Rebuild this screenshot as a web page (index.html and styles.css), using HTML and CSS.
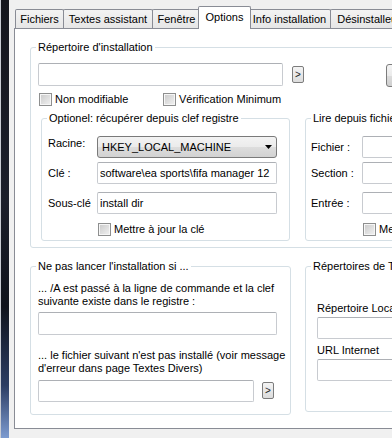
FILE: index.html
```html
<!DOCTYPE html>
<html lang="fr">
<head>
    <meta charset="UTF-8">
    <title>Options</title>
    <link rel="stylesheet" href="styles.css">
</head>
<body>
<div class="screen">
    <div class="desktop"></div>

    <div class="dialog">
        <!-- Tab strip -->
        <div class="tabs">
            <div class="tab tab-files">Fichiers</div>
            <div class="tab tab-texts">Textes assistant</div>
            <div class="tab tab-window">Fenêtre</div>
            <div class="tab tab-options active">Options</div>
            <div class="tab tab-info">Info installation</div>
            <div class="tab tab-uninstall">Désinstalleur</div>
        </div>

        <div class="page">
            <fieldset class="group group-install">
                <legend>Répertoire d'installation</legend>
                <div class="install-body">
                    <div class="path-row">
                        <input class="field field-path" type="text">
                        <button class="btn-more">&gt;</button>
                        <button class="btn-browse"></button>
                    </div>

                    <div class="check-row">
                        <label class="check-item check-first"><span class="check"></span>Non modifiable</label>
                        <label class="check-item"><span class="check"></span>Vérification Minimum</label>
                    </div>

                    <div class="sub-groups">
                        <!-- Registry -->
                        <fieldset class="group group-registry">
                            <legend>Optionel: récupérer depuis clef registre</legend>
                            <div class="registry-body">
                                <div class="form-row">
                                    <span class="form-label label-raise">Racine:</span>
                                    <div class="combo">
                                        <span>HKEY_LOCAL_MACHINE</span>
                                        <svg width="7" height="4" viewBox="0 0 7 4"><path d="M0 0h7L3.5 4z" fill="#000"/></svg>
                                    </div>
                                </div>
                                <div class="form-row row-gap-sm">
                                    <span class="form-label">Clé :</span>
                                    <input class="field field-reg" type="text" value="software\ea sports\fifa manager 12">
                                </div>
                                <div class="form-row row-gap-lg">
                                    <span class="form-label">Sous-clé</span>
                                    <input class="field field-reg" type="text" value="install dir">
                                </div>
                                <label class="check-item registry-check"><span class="check"></span>Mettre à jour la clé</label>
                            </div>
                        </fieldset>

                        <!-- INI file -->
                        <fieldset class="group group-file">
                            <legend>Lire depuis fichier INI</legend>
                            <div class="file-body">
                                <div class="form-row">
                                    <span class="form-label">Fichier :</span>
                                    <input class="field field-ini" type="text">
                                </div>
                                <div class="form-row row-gap-sm">
                                    <span class="form-label">Section :</span>
                                    <input class="field field-ini" type="text">
                                </div>
                                <div class="form-row row-gap-lg">
                                    <span class="form-label">Entrée :</span>
                                    <input class="field field-ini" type="text">
                                </div>
                                <label class="check-item file-check"><span class="check"></span>Mettre à jour</label>
                            </div>
                        </fieldset>
                    </div>
                </div>
            </fieldset>

            <div class="bottom-groups">
                <fieldset class="group group-skip">
                    <legend>Ne pas lancer l'installation si ...</legend>
                    <div class="skip-body">
                        <p class="note">... /A est passé à la ligne de commande et la clef<br>suivante existe dans le registre :</p>
                        <input class="field field-skip-reg" type="text">
                        <p class="note note-second">... le fichier suivant n'est pas installé (voir message<br>d'erreur dans page Textes Divers)</p>
                        <div class="skip-file-row">
                            <input class="field field-skip-file" type="text">
                            <button class="btn-more btn-more-low">&gt;</button>
                        </div>
                    </div>
                </fieldset>

                <fieldset class="group group-dirs">
                    <legend>Répertoires de Travail</legend>
                    <div class="dirs-body">
                        <p class="note">Répertoire Local</p>
                        <input class="field field-dir" type="text">
                        <p class="note note-url">URL Internet</p>
                        <input class="field field-dir" type="text">
                    </div>
                </fieldset>
            </div>
        </div>
    </div>
</div>
</body>
</html>
```

FILE: styles.css
```css
body {
    margin: 0;
    width: 392px;
    height: 438px;
    overflow: hidden;
    font-family: "Liberation Sans", Arial, sans-serif;
    font-size: 11px;
    line-height: 13px;
    color: #000;
    background: #f0f0f0;
}

.screen {
    display: flex;
    height: 438px;
}

.desktop {
    flex: none;
    width: 9px;
    border-left: 1px solid #c9ccd3;
    box-sizing: border-box;
    background: linear-gradient(#15161d 0%, #1c1f2b 45%, #10131c 70%, #2c3d63 88%, #7d9bd0 100%);
}

.dialog {
    flex: none;
    width: 480px;
    padding: 6px 0 0 5px;
    background: #f0f0f0;
}

/* Tabs */
.tabs {
    display: flex;
    align-items: flex-end;
    height: 22px;
    padding-left: 1px;
    position: relative;
    z-index: 1;
}

.tab {
    flex: none;
    box-sizing: border-box;
    height: 19px;
    margin-left: -1px;
    border: 1px solid #898c95;
    border-bottom: 0;
    border-radius: 2px 2px 0 0;
    background: linear-gradient(#f3f3f3, #e6e6e6);
    display: flex;
    align-items: center;
    justify-content: center;
    white-space: nowrap;
}

.tab:first-child {
    margin-left: 0;
}

.tab.active {
    height: 23px;
    margin: 0 -2px -1px -3px;
    padding-bottom: 2px;
    background: #fff;
    position: relative;
    z-index: 2;
}

.tab-files { width: 49px; }
.tab-texts { width: 90px; }
.tab-window { width: 49px; }
.tab-options { width: 53px; }
.tab-info { width: 83px; }
.tab-uninstall { width: 78px; }

.page {
    box-sizing: border-box;
    height: 401px;
    border: 1px solid #898c95;
    background: #fff;
}

/* Group boxes */
.group {
    margin: 0;
    padding: 0;
    min-width: 0;
    border: 1px solid #d5dfe5;
    border-radius: 3px;
    box-sizing: border-box;
}

.group legend {
    margin-left: 5px;
    padding: 0 2px;
    line-height: 13px;
    white-space: nowrap;
}

.group-install {
    width: 440px;
    margin: 12px 0 0 15px;
}

.install-body {
    padding: 9px 0 6px 7px;
}

/* Inputs, buttons, checkboxes */
.field {
    box-sizing: border-box;
    height: 22px;
    margin: 0;
    padding: 0 2px;
    border: 1px solid #c8cbd0;
    border-top-color: #adb0b5;
    border-radius: 2px;
    background: #fff;
    font: inherit;
    color: #000;
    outline: none;
}

.btn-more {
    flex: none;
    box-sizing: border-box;
    width: 12px;
    height: 17px;
    padding: 0;
    border: 1px solid #7c7c7c;
    border-radius: 2px;
    background: linear-gradient(#f4f4f4, #dcdcdc);
    font: inherit;
    font-size: 10px;
    line-height: 14px;
    color: #222;
}

.btn-browse {
    flex: none;
    box-sizing: border-box;
    width: 75px;
    height: 23px;
    margin: 1px 0 0 82px;
    border: 1px solid #7c7c7c;
    border-radius: 3px;
    background: linear-gradient(#f4f4f4 0%, #ebebeb 50%, #dddddd 50%, #cfcfcf 100%);
}

.check-item {
    display: flex;
    align-items: center;
    gap: 3px;
    height: 13px;
    white-space: nowrap;
}

.check {
    flex: none;
    box-sizing: border-box;
    width: 13px;
    height: 13px;
    border: 1px solid #8e8f8f;
    background: linear-gradient(135deg, #c9c9c9, #f2f2f2);
    box-shadow: inset 0 0 0 1px #f6f6f6;
}

.path-row {
    display: flex;
    align-items: flex-start;
    height: 23px;
}

.field-path {
    width: 245px;
    height: 23px;
}

.path-row .btn-more {
    margin: 3px 0 0 9px;
}

.check-row {
    display: flex;
    margin-top: 7px;
}

.check-first {
    width: 124px;
    margin-left: 1px;
}

/* Registry and INI groups */
.sub-groups {
    display: flex;
    align-items: flex-start;
    margin: 6px 0 0 3px;
}

.group-registry {
    width: 249px;
}

.group-file {
    width: 150px;
    margin-left: 15px;
}

.registry-body {
    padding: 11px 0 4px 6px;
}

.file-body {
    padding: 11px 0 4px 5px;
}

.form-row {
    display: flex;
    align-items: center;
    height: 22px;
}

.row-gap-sm { margin-top: 4px; }
.row-gap-lg { margin-top: 8px; }

.form-label {
    flex: none;
    width: 49px;
}

.file-body .form-label {
    width: 51px;
}

.label-raise {
    align-self: flex-start;
    margin-top: 1px;
}

.combo {
    box-sizing: border-box;
    width: 180px;
    height: 22px;
    display: flex;
    align-items: center;
    justify-content: space-between;
    padding: 0 4px 0 4px;
    border: 1px solid #7a7a7a;
    border-radius: 3px;
    background: linear-gradient(#f3f3f3 0%, #ebebeb 50%, #dddddd 50%, #d2d2d2 100%);
}

.field-reg {
    width: 180px;
}

.field-ini {
    width: 80px;
}

.registry-check {
    margin: 9px 0 0 50px;
}

.file-check {
    margin: 9px 0 0 52px;
}

/* Bottom groups */
.bottom-groups {
    display: flex;
    align-items: flex-start;
    margin: 12px 0 0 15px;
}

.group-skip {
    width: 261px;
}

.group-dirs {
    width: 150px;
    margin-left: 14px;
}

.skip-body {
    padding: 9px 0 12px 7px;
}

.note {
    margin: 0;
    white-space: nowrap;
}

.field-skip-reg {
    display: block;
    width: 239px;
    height: 23px;
    margin-top: 4px;
}

.note-second {
    margin-top: 14px;
}

.skip-file-row {
    display: flex;
    align-items: flex-start;
    margin-top: 5px;
}

.field-skip-file {
    width: 216px;
}

.btn-more-low {
    margin: 2px 0 0 8px;
}

.dirs-body {
    padding: 29px 0 30px 11px;
}

.field-dir {
    display: block;
    width: 130px;
    margin-top: 2px;
}

.note-url {
    margin-top: 5px;
}
```
